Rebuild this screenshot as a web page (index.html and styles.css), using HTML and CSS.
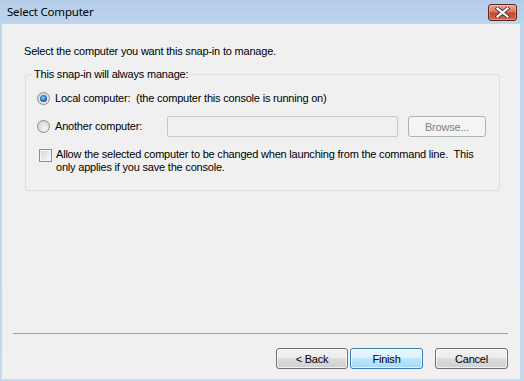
FILE: index.html
```html
<!DOCTYPE html>
<html>
<head>
<meta charset="utf-8">
<link rel="stylesheet" href="styles.css">
</head>
<body>
<div class="window">
  <div class="titlebar">
    <span class="title">Select Computer</span>
    <span class="close">
      <svg width="15" height="11" viewBox="0 0 15 11">
        <path d="M2.5 1.5 L12.5 9.5 M12.5 1.5 L2.5 9.5" stroke="#3a3a3a" stroke-width="4" stroke-linecap="square" fill="none"/>
        <path d="M2.5 1.5 L12.5 9.5 M12.5 1.5 L2.5 9.5" stroke="#ffffff" stroke-width="2.2" stroke-linecap="square" fill="none"/>
      </svg>
    </span>
  </div>
  <div class="client">
    <div class="intro">Select the computer you want this snap-in to manage.</div>
    <div class="group">
      <span class="legend">This snap-in will always manage:</span>
      <div class="row row-local">
        <span class="radio checked"></span>
        <span class="label">Local computer:&nbsp; (the computer this console is running on)</span>
      </div>
      <div class="row row-other">
        <span class="radio"></span>
        <span class="label label-fixed">Another computer:</span>
        <span class="textbox"></span>
        <span class="btn disabled browse">Browse...</span>
      </div>
      <div class="row row-check">
        <span class="checkbox"></span>
        <span class="label">Allow the selected computer to be changed when launching from the command line.&nbsp; This<br>only applies if you save the console.</span>
      </div>
    </div>
    <div class="spacer"></div>
    <div class="separator"></div>
    <div class="buttons">
      <span class="btn back">&lt; Back</span>
      <span class="btn default finish">Finish</span>
      <span class="btn cancel">Cancel</span>
    </div>
  </div>
</div>
</body>
</html>
```

FILE: styles.css
```css
html, body {
  margin: 0;
  padding: 0;
}
body {
  width: 524px;
  height: 381px;
  overflow: hidden;
  font-family: "Liberation Sans", Arial, sans-serif;
  font-size: 11px;
  letter-spacing: -0.2px;
  color: #000;
}
.window {
  width: 524px;
  height: 381px;
  box-sizing: border-box;
  display: flex;
  flex-direction: column;
  background: linear-gradient(#b3cce8 0px, #bed5ee 24px, #c4d9f0 100%);
}
.titlebar {
  height: 24px;
  display: flex;
  align-items: flex-start;
  padding: 0 7px 0 7px;
}
.title {
  font-family: "Noto Sans", "Open Sans", sans-serif;
  font-size: 11.5px;
  letter-spacing: -0.2px;
  line-height: 12px;
  margin-top: 6px;
  color: #000;
}
.close {
  margin-left: auto;
  margin-top: 4px;
  width: 29px;
  height: 17px;
  box-sizing: border-box;
  border: 1px solid #5d2824;
  border-radius: 3px;
  background: linear-gradient(#e9a795 0%, #d9745d 45%, #c8452c 55%, #d46c52 100%);
  display: flex;
  align-items: center;
  justify-content: center;
  box-shadow: inset 0 0 0 1px rgba(255,255,255,0.25);
}
.close svg { display: block; }
.client {
  flex: 1;
  margin: 0 4px 2px 2px;
  background: #f0f0f0;
  display: flex;
  flex-direction: column;
}
.intro {
  margin: 21px 0 0 22px;
  line-height: 13px;
}
.group {
  position: relative;
  margin: 16px 0 0 23px;
  width: 475px;
  height: 117px;
  box-sizing: border-box;
  border: 1px solid #d5dfe5;
  border-radius: 3px;
  padding: 16px 0 0 11px;
  display: flex;
  flex-direction: column;
  gap: 11px;
}
.legend {
  position: absolute;
  left: 6px;
  top: -7px;
  padding: 0 2px;
  background: #f0f0f0;
  line-height: 13px;
}
.row {
  display: flex;
  align-items: center;
}
.row-local { height: 14px; }
.row-other { height: 21px; }
.row-check { align-items: flex-start; }
.label { line-height: 13px; }
.label-fixed { width: 112px; }
.radio {
  width: 13px;
  height: 13px;
  box-sizing: border-box;
  border-radius: 50%;
  border: 1px solid #8c8c8c;
  background: radial-gradient(circle at 60% 65%, #f4f4f4 0%, #dcdcdc 60%, #cfcfcf 100%);
  margin-right: 5px;
  position: relative;
  flex: none;
}
.radio.checked::after {
  content: "";
  position: absolute;
  left: 2px;
  top: 2px;
  width: 7px;
  height: 7px;
  border-radius: 50%;
  background: radial-gradient(circle at 45% 40%, #8fd3fb 0%, #2a7fc8 45%, #153e78 80%, #0e2a55 100%);
}
.checkbox {
  width: 13px;
  height: 13px;
  box-sizing: border-box;
  border: 1px solid #8e8f8f;
  background: linear-gradient(135deg, #d3d3d3 0%, #e8e8e8 55%, #fbfbfb 100%);
  box-shadow: inset 0 0 0 1px #f4f4f4;
  margin: 1px 4px 0 2px;
  flex: none;
}
.textbox {
  width: 231px;
  height: 21px;
  box-sizing: border-box;
  border: 1px solid #c9c9c9;
  border-radius: 2px;
  background: #f0f0f0;
  flex: none;
}
.btn {
  display: flex;
  align-items: center;
  justify-content: center;
  height: 21px;
  box-sizing: border-box;
  border: 1px solid #707070;
  border-radius: 3px;
  background: linear-gradient(#f2f2f2 0%, #ebebeb 50%, #dddddd 50%, #cfcfcf 100%);
  box-shadow: inset 0 0 0 1px rgba(255,255,255,0.7);
  flex: none;
}
.btn.disabled {
  border-color: #adb2b5;
  background: #f4f4f4;
  color: #838383;
  box-shadow: none;
}
.browse {
  width: 78px;
  margin-left: 10px;
}
.spacer { flex: 1; }
.separator {
  height: 1px;
  background: #a0a0a0;
  margin: 0 12px 0 11px;
}
.buttons {
  display: flex;
  justify-content: flex-end;
  margin: 14px 12px 10px 0;
}
.back { width: 72px; }
.finish {
  width: 73px;
  margin-left: 2px;
  border-color: #3c7fb1;
  background: linear-gradient(#eaf6fd 0%, #d9f0fc 50%, #bee6fd 50%, #a7d9f5 100%);
}
.cancel {
  width: 73px;
  margin-left: 12px;
}
```
